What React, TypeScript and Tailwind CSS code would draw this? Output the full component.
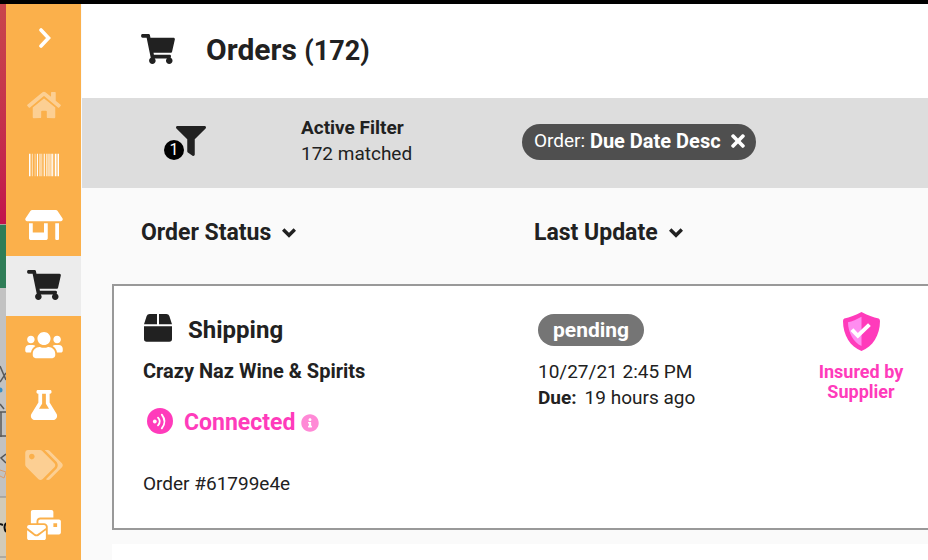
import clsx from "clsx";
import type { IconType } from "react-icons";
import {
  FaBarcode,
  FaFilter,
  FaFlask,
  FaHome,
  FaInfoCircle,
  FaMailBulk,
  FaShoppingCart,
  FaStoreAlt,
  FaTags,
  FaTimes,
  FaUsers,
} from "react-icons/fa";

interface NavItem {
  label: string;
  icon: IconType;
  active?: boolean;
  muted?: boolean;
}

const navItems: Array<NavItem> = [
  { label: "Home", icon: FaHome, muted: true },
  { label: "Products", icon: FaBarcode },
  { label: "Store", icon: FaStoreAlt },
  { label: "Orders", icon: FaShoppingCart, active: true },
  { label: "Customers", icon: FaUsers },
  { label: "Lab", icon: FaFlask },
  { label: "Tags", icon: FaTags, muted: true },
  { label: "Mail", icon: FaMailBulk },
];

function Backdrop() {
  return (
    <div className="flex w-[6px] shrink-0 flex-col overflow-hidden" aria-hidden="true">
      <div className="h-[220px] bg-linear-to-b from-[#c8464c] to-[#c2134c]" />
      <div className="h-[64px] border-t border-[#a9a09a] bg-[#2f7d57]" />
      <div className="flex-1 bg-[#cfc6b0]">
        <svg viewBox="0 0 6 272" className="h-[272px] w-[6px]" fill="none">
          <rect y="0" width="6" height="209" fill="#c2c2c2" />
          <rect y="209" width="6" height="63" fill="#d2cbb8" />
          <path d="M0 209h6M0 269h6" stroke="#8b8b8b" />
          <path d="M0 78l6 14M0 94l6-9M0 116l4 5M6 124H0M1 124v25M0 148h6" stroke="#5a5a5a" strokeWidth="1.5" />
          <circle cx="0" cy="102" r="2.5" fill="#3a8fc4" />
          <path d="M6 166l-5 4 5 5" stroke="#555" strokeWidth="1.5" />
          <path d="M0 182l6 2-2 6-4-2" stroke="#d99a6c" />
          <path d="M0 236l3 1M6 235q-3 4 0 9" stroke="#111" strokeWidth="2" />
        </svg>
      </div>
    </div>
  );
}

function Sidebar() {
  return (
    <nav className="flex w-[75px] shrink-0 flex-col bg-[#fbb04b] text-white">
      <button
        type="button"
        aria-label="Expand menu"
        className="flex h-[72px] items-center justify-center pb-1 pl-0.5"
      >
        <svg viewBox="0 0 12 20" className="h-5 w-3" fill="none" stroke="currentColor" strokeWidth="3.6">
          <path d="M2 2l7.500 8L2 18" strokeLinecap="round" />
        </svg>
      </button>
      {navItems.map(({ label, icon: Icon, active, muted }) => (
        <a
          key={label}
          href="#"
          aria-label={label}
          className={clsx(
            "flex h-[60px] items-center justify-center pb-0.5",
            active && "bg-[#ececec] text-[#212121]",
          )}
        >
          <Icon className={clsx("h-[30px] w-[38px]", muted && "opacity-40")} />
        </a>
      ))}
    </nav>
  );
}

function ChevronDown() {
  return (
    <svg viewBox="0 0 14 10" className="h-2.5 w-3.5" fill="none" stroke="currentColor" strokeWidth="3.4">
      <path d="M1.200 1.500L7 7.300l5.800-5.800" />
    </svg>
  );
}

function BoxIcon() {
  return (
    <svg viewBox="0 0 84 84" className="mb-1 size-7" fill="currentColor">
      <path d="M39 0H17q-7 0-9 6L0 31H39ZM45 0H67q7 0 9 6L84 31H45Z" />
      <path d="M0 37H84V75q0 8-8 8H8q-8 0-8-8Z" />
    </svg>
  );
}

function SignalIcon() {
  return (
    <svg viewBox="0 0 26 26" className="mb-1 size-[26px]" fill="none" stroke="#fff" strokeWidth="1.8" strokeLinecap="round">
      <circle cx="13" cy="13" r="13" fill="#ff3bbb" stroke="none" />
      <circle cx="7.800" cy="13.500" r="1.900" fill="#fff" stroke="none" />
      <path d="M11 9.700q3.600 3.800 0 7.600M14.800 6.600q5.400 6.900 0 13.800" />
    </svg>
  );
}

function InsuredIcon() {
  return (
    <svg viewBox="0 0 112 118" className="h-[39px] w-[37px]">
      <path
        d="M56 0C38 10 20 16 4 20q-4 2-4 7C0 70 22 105 56 118C90 105 112 70 112 27q0-5-4-7C92 16 74 10 56 0Z"
        fill="#ff3bbb"
      />
      <path d="M56 14C42 22 28 28 15 31C16 64 32 92 56 103Z" fill="#ff8df0" />
      <path d="M27 53l18 19 35-34" fill="none" stroke="#fff" strokeWidth="12" />
    </svg>
  );
}

function FilterBar() {
  return (
    <section className="flex h-[90px] items-start bg-[#ddd] pt-4">
      <button type="button" aria-label="Filters" className="relative mt-3 ml-[94px] size-[30px] shrink-0">
        <FaFilter className="size-[30px]" />
        <span className="absolute top-3.5 -left-3 flex size-5 items-center justify-center rounded-full bg-black text-base text-white">
          1
        </span>
      </button>
      <div className="mt-px ml-[95px] w-[221px] shrink-0 text-[19px] leading-[26px]">
        <p className="font-bold">Active Filter</p>
        <p>172 matched</p>
      </div>
      <div className="mt-2.5 flex h-9 shrink-0 items-center rounded-full bg-[#4f4f4f] pr-2 pb-0.5 pl-3 text-[19px] whitespace-pre text-white">
        <span>Order: </span>
        <span className="text-xl font-bold">Due Date Desc</span>
        <button type="button" aria-label="Remove filter" className="ml-[7px]">
          <FaTimes className="size-5" />
        </button>
      </div>
    </section>
  );
}

function OrderCard() {
  return (
    <article className="ml-[30px] flex h-[246px] border-2 border-r-0 border-[#999] bg-white">
      <div className="w-[424px] shrink-0 pt-7 pl-[29px]">
        <h2 className="flex h-8 items-center gap-4 pl-px text-2xl font-bold">
          <BoxIcon />
          Shipping
        </h2>
        <p className="mt-3 text-xl leading-[26px] font-bold">Crazy Naz Wine &amp; Spirits</p>
        <div className="mt-[23px] ml-1 flex h-8 items-center text-[23px] font-bold text-[#ff3bbb]">
          <SignalIcon />
          <span className="ml-[11px]">Connected</span>
          <FaInfoCircle className="ml-1.5 size-[18px] opacity-60" />
        </div>
        <p className="mt-8 text-[19px] leading-[26px]">Order #61799e4e</p>
      </div>
      <div className="w-[244px] shrink-0 pt-7">
        <span className="inline-flex h-8 items-center rounded-full bg-[#757575] px-[15px] pt-px text-[21px] font-bold text-white">
          pending
        </span>
        <p className="mt-[13px] text-[19px] leading-[26px]">10/27/21 2:45 PM</p>
        <p className="text-[19px] leading-[26px]">
          <b className="mr-2">Due:</b>
          19 hours ago
        </p>
      </div>
      <div className="flex w-[158px] shrink-0 flex-col items-center pt-[26px] text-center text-lg leading-5 font-bold text-[#ff3bbb]">
        <InsuredIcon />
        <p className="mt-[11px] w-24">Insured by Supplier</p>
      </div>
    </article>
  );
}

export default function App() {
  return (
    <div className="flex min-h-screen flex-col overflow-hidden border-t-4 border-black bg-[#fafafa] font-[Roboto,sans-serif] text-[#212121]">
      <div className="flex flex-1">
        <Backdrop />
        <Sidebar />
        <main className="flex min-w-0 flex-1 flex-col overflow-hidden pl-px">
          <header className="flex h-[94px] items-center bg-white pb-0.5 pl-[59px]">
            <FaShoppingCart className="mb-0.5 h-[30px] w-[34px]" />
            <h1 className="ml-[31px] text-3xl font-bold">
              Orders <span className="text-[27px]">(172)</span>
            </h1>
          </header>
          <FilterBar />
          <div className="flex h-24 items-center pb-1.5 pl-[59px] text-[23px] font-bold">
            <button type="button" className="flex w-[393px] shrink-0 items-center gap-[11px]">
              Order Status
              <ChevronDown />
            </button>
            <button type="button" className="flex shrink-0 items-center gap-[11px]">
              Last Update
              <ChevronDown />
            </button>
          </div>
          <OrderCard />
          <div className="mt-3.5 ml-[30px] min-h-4 flex-1 bg-white" />
        </main>
      </div>
    </div>
  );
}
